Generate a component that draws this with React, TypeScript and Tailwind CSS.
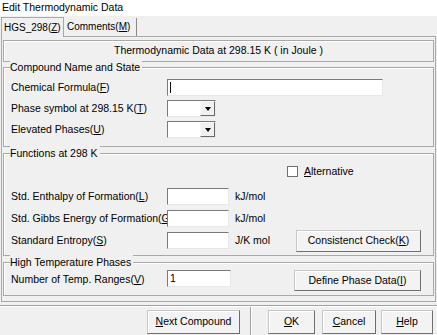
import { ReactNode } from "react";

const font = "font-['Liberation_Sans',Arial,sans-serif]";

const Edit = ({ w, value }: { w: string; value?: string }) => (
  <div
    className={`${w} h-[17px] bg-white border border-t-[#7a7a7a] border-l-[#7a7a7a] border-b-[#e8e8e8] border-r-[#e8e8e8] pl-[2px] text-[10.5px] leading-[14px]`}
  >
    {value}
  </div>
);

const Combo = () => (
  <div className="flex w-[49px] h-[17px] bg-white border border-t-[#7a7a7a] border-l-[#7a7a7a] border-b-[#e8e8e8] border-r-[#e8e8e8]">
    <div className="flex-1" />
    <div className="w-[15px] h-full bg-[#f0f0f0] border border-t-[#f8f8f8] border-l-[#f8f8f8] border-b-[#6a6a6a] border-r-[#6a6a6a] flex items-center justify-center">
      <div className="w-0 h-0 border-l-[3.5px] border-r-[3.5px] border-t-[4px] border-l-transparent border-r-transparent border-t-black" />
    </div>
  </div>
);

const Btn = ({ className, children }: { className: string; children: ReactNode }) => (
  <div
    className={`${className} flex items-center justify-center bg-[#f3f3f3] border border-t-[#c8c8c8] border-l-[#c8c8c8] border-b-[#6e6e6e] border-r-[#6e6e6e] shadow-[inset_1px_1px_0_#ffffff] text-[10.5px]`}
  >
    {children}
  </div>
);

const Group = ({ title, className, children }: { title: string; className: string; children: ReactNode }) => (
  <div className={`relative border border-[#a8a8a8] shadow-[inset_1px_1px_0_#ffffff] ${className}`}>
    <span className="absolute left-[6px] top-[-8px] bg-[#f0f0f0] pr-[2px] leading-[14px]">{title}</span>
    {children}
  </div>
);

const Label = ({ children }: { children: ReactNode }) => (
  <span className="w-[156px] shrink-0 whitespace-nowrap">{children}</span>
);

export default function App() {
  return (
    <div className={`w-[437px] h-[335px] overflow-hidden bg-[#f0f0f0] text-[10.5px] text-black ${font}`}>
      <div className="h-[16px] bg-white pl-[2px] leading-[14px]">Edit Thermodynamic Data</div>

      <div className="flex h-[20px] items-end pl-[1px] text-[10px]">
        <div className="h-[20px] w-[63px] border-l border-t border-r border-[#a8a8a8] bg-[#f0f0f0] pl-[2px] pt-[2px] relative top-[1px] z-10 whitespace-nowrap">
          HGS_298(<u>Z</u>)
        </div>
        <div className="h-[18px] w-[73px] border-r border-[#8a8a8a] pl-[3px] pt-[1px] whitespace-nowrap">
          Comments(<u>M</u>)
        </div>
      </div>

      <div className="mx-[1px] h-[266px] border border-[#a8a8a8] pl-[1px] pr-[1px] pt-[3px]">
        <div className="h-[22px] border border-[#a8a8a8] shadow-[inset_1px_1px_0_#ffffff] flex items-center justify-center">
          Thermodynamic Data at 298.15 K ( in Joule )
        </div>

        <Group title="Compound Name and State" className="mt-[5px] pl-[7px] pt-[11px] pb-[8px] flex flex-col gap-[4px]">
          <div className="flex items-center h-[17px]">
            <Label>Chemical Formula(<u>F</u>)</Label>
            <div className="w-[216px] h-[17px] bg-white border border-t-[#7a7a7a] border-l-[#7a7a7a] border-b-[#e8e8e8] border-r-[#e8e8e8] flex items-center pl-[2px]">
              <div className="w-px h-[11px] bg-black" />
            </div>
          </div>
          <div className="flex items-center h-[17px]">
            <Label>Phase symbol at 298.15 K(<u>T</u>)</Label>
            <Combo />
          </div>
          <div className="flex items-center h-[17px]">
            <Label>Elevated Phases(<u>U</u>)</Label>
            <Combo />
          </div>
        </Group>

        <Group title="Functions at 298 K" className="mt-[6px] pl-[7px] pt-[12px] pb-[6px]">
          <div className="flex items-center h-[11px] pl-[276px]">
            <div className="w-[11px] h-[11px] bg-white border border-[#707070]" />
            <span className="ml-[6px]">
              <u>A</u>lternative
            </span>
          </div>
          <div className="mt-[11px] flex flex-col gap-[5px]">
            <div className="flex items-center h-[17px]">
              <Label>Std. Enthalpy of Formation(<u>L</u>)</Label>
              <Edit w="w-[62px]" />
              <span className="ml-[6px]">kJ/mol</span>
            </div>
            <div className="flex items-center h-[17px]">
              <Label>Std. Gibbs Energy of Formation(<u>G</u>)</Label>
              <Edit w="w-[62px]" />
              <span className="ml-[6px]">kJ/mol</span>
            </div>
            <div className="flex items-center h-[17px]">
              <Label>Standard Entropy(<u>S</u>)</Label>
              <Edit w="w-[62px]" />
              <span className="ml-[6px] w-[61px] shrink-0">J/K mol</span>
              <Btn className="w-[125px] h-[22px] shrink-0">
                Consistenct Check(<u>K</u>)
              </Btn>
            </div>
          </div>
        </Group>

        <Group title="High Temperature Phases" className="mt-[6px] pl-[7px] pt-[7px] pb-[4px]">
          <div className="flex items-start h-[21px]">
            <span className="w-[156px] shrink-0 leading-[17px] mt-[1px]">
              Number of Temp. Ranges(<u>V</u>)
            </span>
            <Edit w="w-[64px]" value="1" />
            <Btn className="ml-[63px] w-[127px] h-[21px]">
              Define Phase Data(<u>I</u>)
            </Btn>
          </div>
        </Group>
      </div>

      <div className="mt-[3px] h-[2px] border-t border-[#a0a0a0] border-b border-b-white" />

      <div className="flex items-start">
        <Btn className="ml-[147px] mt-[3px] w-[93px] h-[24px]">
          <u>N</u>ext Compound
        </Btn>
        <div className="ml-[10px] w-[2px] h-[30px] border-l border-[#a0a0a0] border-r border-r-white" />
        <Btn className="ml-[16px] mt-[3px] w-[47px] h-[24px]">
          <u>O</u>K
        </Btn>
        <Btn className="ml-[7px] mt-[3px] w-[54px] h-[24px]">
          <u>C</u>ancel
        </Btn>
        <Btn className="ml-[5px] mt-[3px] w-[52px] h-[24px]">
          <u>H</u>elp
        </Btn>
      </div>
    </div>
  );
}
